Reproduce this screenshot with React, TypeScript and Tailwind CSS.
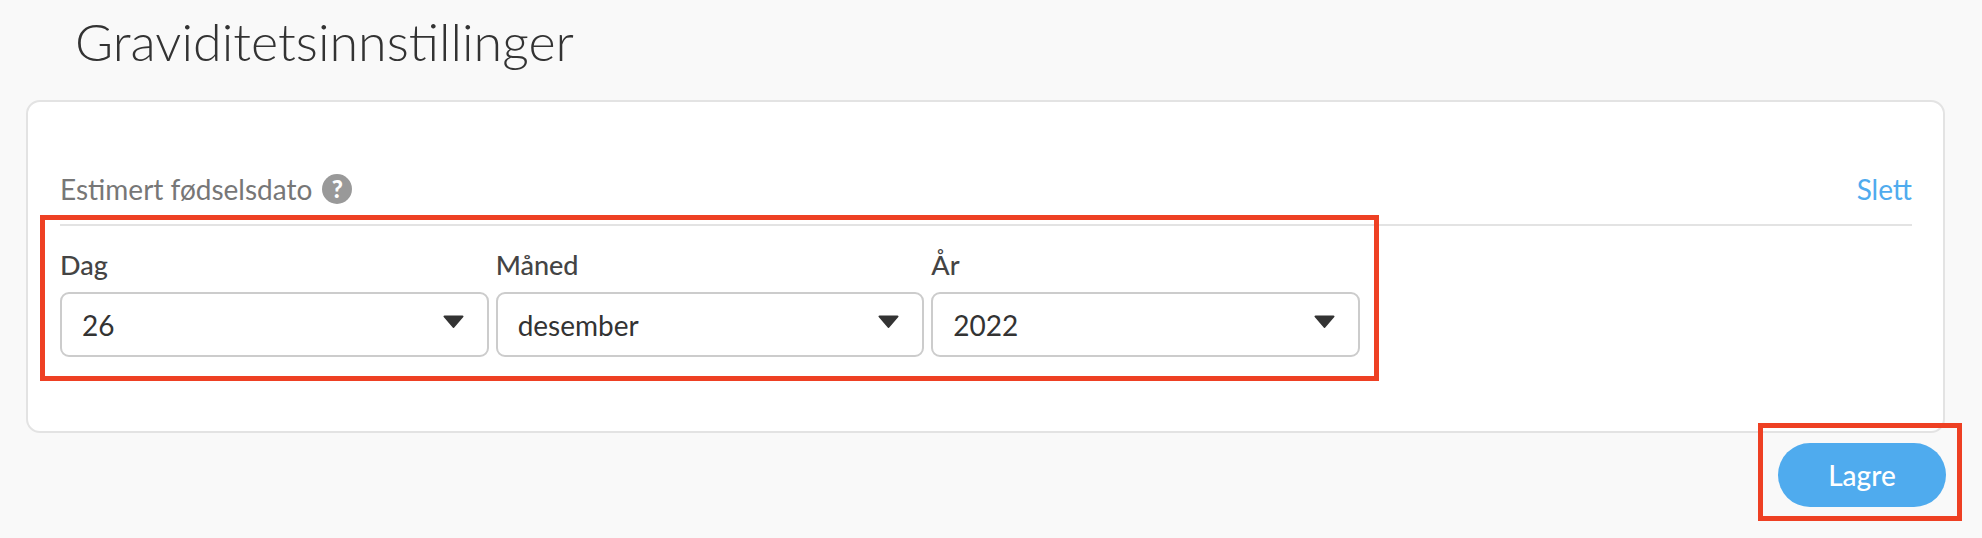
const fields = [
  { label: "Dag", value: "26" },
  { label: "Måned", value: "desember" },
  { label: "År", value: "2022" },
];

function SelectField({ label, value }: { label: string; value: string }) {
  return (
    <div className="flex flex-col">
      <label className="h-[50px] pt-[3px] text-[27px] font-medium leading-[40px] text-[#444]">{label}</label>
      <div className="flex h-[65px] items-center justify-between rounded-[9px] border-2 border-[#ccc] bg-white pl-[20px] pr-[23px]">
        <span className="text-[28px] leading-none text-[#333]">{value}</span>
        <svg width="21" height="13" viewBox="0 0 21 13" className="mb-[6px]" aria-hidden>
          <path d="M1.5 0.5h18a1 1 0 0 1 .8 1.6l-9 10.4a1 1 0 0 1-1.6 0l-9-10.4a1 1 0 0 1 .8-1.6z" fill="#333" />
        </svg>
      </div>
    </div>
  );
}

export default function App() {
  return (
    <main className="h-screen overflow-hidden bg-[#f9f9f9] pl-[26px] pr-[37px] font-['Lato',sans-serif]">
      <h1 className="h-[100px] pl-[49px] pt-[10px] text-[52px] font-light leading-[62px] text-[#333]">
        Graviditetsinnstillinger
      </h1>

      <section className="h-[333px] rounded-[14px] border-2 border-[#e3e3e3] bg-white pl-[32px] pr-[31px]">
        <div className="flex h-[124px] items-end justify-between border-b-2 border-[#e3e3e3] pb-[18px]">
          <div className="flex items-center gap-[10px] text-[28px] leading-[34px] text-[#777]">
            Estimert fødselsdato
            <span className="flex h-[30px] w-[30px] items-center justify-center rounded-full bg-[#999] text-[24px] font-black text-white">
              ?
            </span>
          </div>
          <a className="text-[28px] leading-[34px] text-[#4fabee]">Slett</a>
        </div>

        <div className="relative w-[1300px]">
          <div className="grid grid-cols-3 gap-x-[7px] pt-[16px]">
            {fields.map((f) => (
              <SelectField key={f.label} {...f} />
            ))}
          </div>
          <div aria-hidden className="absolute left-[-20px] right-[-19px] top-[-11px] h-[166px] border-[5.5px] border-[#ee4023]" />
        </div>
      </section>

      <div className="mr-[-1px] flex justify-end pt-[10px]">
        <div className="relative">
          <button className="h-[64px] w-[168px] rounded-full bg-[#4fabee] text-[28px] font-medium text-white">
            Lagre
          </button>
          <div aria-hidden className="absolute bottom-[-14px] left-[-20px] right-[-16px] top-[-20px] border-[5.5px] border-[#ee4023]" />
        </div>
      </div>
    </main>
  );
}
